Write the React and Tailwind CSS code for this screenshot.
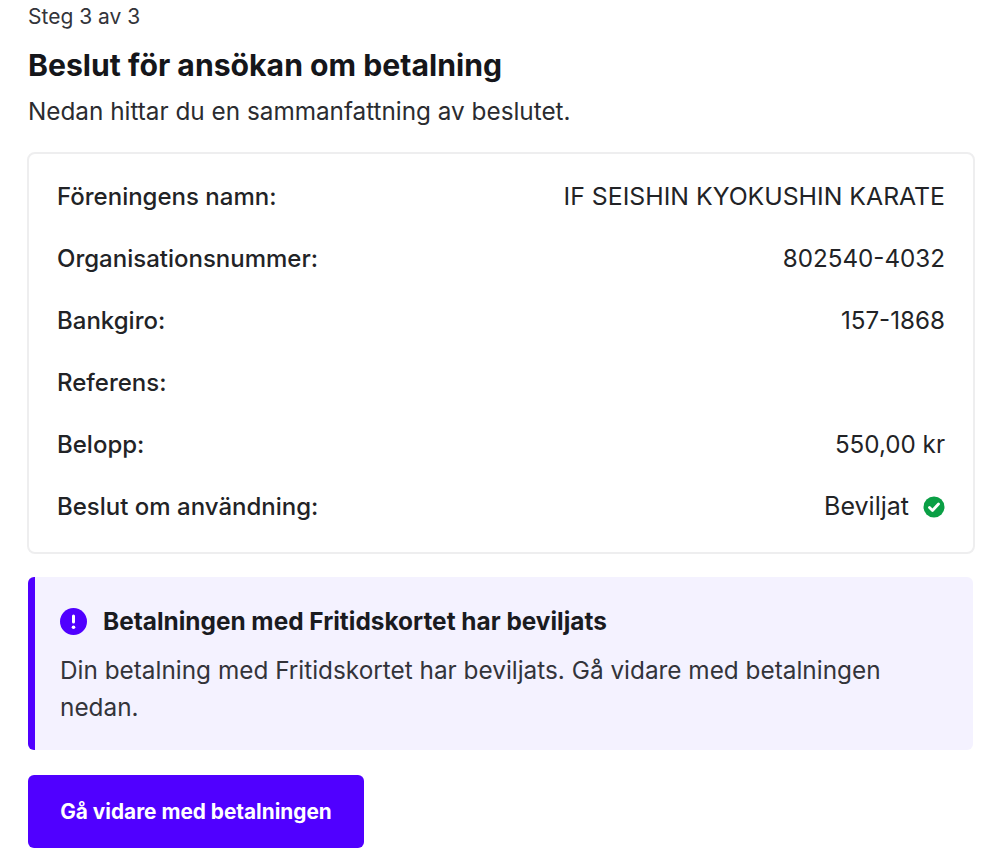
const font = "font-['Inter',sans-serif]";

const rows = [
  { label: 'Föreningens namn:', value: 'IF SEISHIN KYOKUSHIN KARATE', valueClass: 'text-[24.8px]' },
  { label: 'Organisationsnummer:', value: '802540-4032' },
  { label: 'Bankgiro:', value: '157-1868' },
  { label: 'Referens:', value: '' },
  { label: 'Belopp:', value: '550,00 kr' },
];

// Green check badge
const CheckBadge = () => (
  <svg width="22" height="22" viewBox="0 0 22 22" className="shrink-0">
    <circle cx="11" cy="11" r="10.5" fill="#0a9f45" />
    <path d="M6.5 11.5l3 3 6-6.5" fill="none" stroke="#fff" strokeWidth="2.8" strokeLinecap="round" strokeLinejoin="round" />
  </svg>
);

// Purple exclamation badge
const AlertBadge = () => (
  <svg width="27" height="27" viewBox="0 0 27 27" className="shrink-0">
    <circle cx="13.5" cy="13.5" r="13.5" fill="#5000ff" />
    <rect x="12" y="6.5" width="3" height="9" rx="1.5" fill="#fff" />
    <circle cx="13.5" cy="19.2" r="1.8" fill="#fff" />
  </svg>
);

const Row = ({ label, valueClass = 'text-[24.2px]', children }) => (
  <div className="flex h-[62px] items-center justify-between text-[#222326]">
    <span className="text-[24px] font-medium">{label}</span>
    <span className={`flex items-center gap-[14px] ${valueClass}`}>{children}</span>
  </div>
);

const App = () => {
  return (
    <div className={`h-[852px] overflow-hidden bg-white pl-[28px] pr-[25px] text-[#1d1e21] ${font}`}>
      <p className="pt-[3px] text-[21px] leading-[28px] text-[#33343a]">Steg 3 av 3</p>
      <h1 className="mt-[16px] text-[30.2px] font-bold leading-[36px] text-[#15161a]">Beslut för ansökan om betalning</h1>
      <p className="mt-[10px] text-[24.3px] leading-[36px] text-[#2b2c30]">Nedan hittar du en sammanfattning av beslutet.</p>

      <div className="ml-[-1px] mt-[23px] rounded-[8px] border-2 border-[#eeeeef] px-[28px] pb-[14px] pt-[12px]">
        {rows.map((row) => (
          <Row key={row.label} label={row.label} valueClass={row.valueClass}>{row.value}</Row>
        ))}
        <Row label="Beslut om användning:" valueClass="text-[25px]">
          Beviljat
          <CheckBadge />
        </Row>
      </div>

      <div className="mr-[2px] mt-[23px] h-[173px] rounded-[6px] border-l-[7px] border-[#5000ff] bg-[#f4f2ff] pl-[25px] pr-[60px] pt-[30px]">
        <div className="flex items-center gap-[16px]">
          <AlertBadge />
          <span className="text-[24.4px] font-bold leading-[28px] text-[#1a1b1f]">Betalningen med Fritidskortet har beviljats</span>
        </div>
        <p className="mt-[17px] text-[24.35px] leading-[37px] text-[#33343a]">
          Din betalning med Fritidskortet har beviljats. Gå vidare med betalningen nedan.
        </p>
      </div>

      <button className="mt-[25px] h-[73px] w-[336px] rounded-[6px] bg-[#5000ff] text-[20.8px] font-bold text-white">
        Gå vidare med betalningen
      </button>
    </div>
  );
};

export default App;
